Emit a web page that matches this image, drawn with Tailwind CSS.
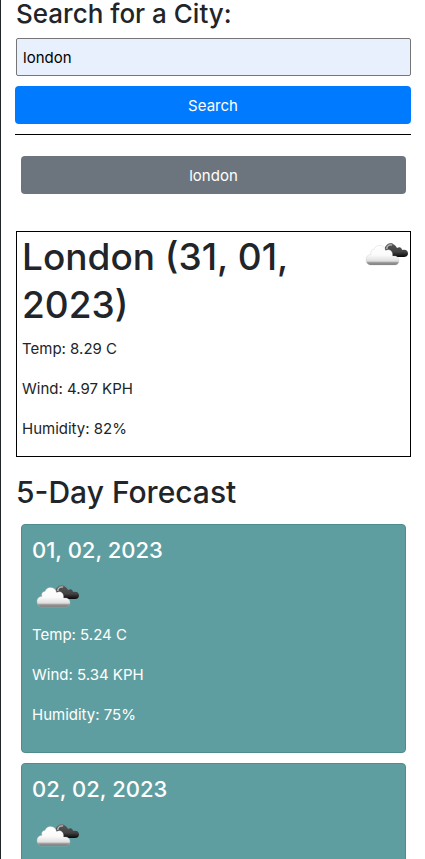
<!DOCTYPE html>
<html lang="en">
<head>
<meta charset="utf-8">
<meta name="viewport" content="width=device-width, initial-scale=1">
<title>Weather Dashboard</title>
<script src="https://cdn.jsdelivr.net/npm/@tailwindcss/browser@4"></script>
</head>
<body class="overflow-x-hidden bg-white font-['Inter','Liberation_Sans',sans-serif] text-[15px] leading-6 text-[#212529]">
<svg class="absolute size-0" aria-hidden="true">
  <defs>
    <linearGradient id="light" x1="0" y1="0" x2="0" y2="1">
      <stop offset="0" stop-color="#fff"/><stop offset=".5" stop-color="#fafafa"/><stop offset=".8" stop-color="#dedede"/><stop offset=".88" stop-color="#999"/><stop offset="1" stop-color="#777"/>
    </linearGradient>
    <linearGradient id="dark" x1="0" y1="0" x2="0" y2="1">
      <stop offset="0" stop-color="#555"/><stop offset=".6" stop-color="#424242"/><stop offset="1" stop-color="#080808"/>
    </linearGradient>
    <symbol id="clouds" viewBox="0 0 50 50">
      <path d="M24 20C23 16 27 13 31 14C33 14 35 16 36 18C39 16 41 18 41 20C45 19 47 21 47 23.500C47 26 45 27 43 27H28Z" fill="url(#dark)"/>
      <path d="M25.500 19C25.500 15.500 28 13.700 31.500 14.200" fill="none" stroke="#777" stroke-width="2.200"/>
      <path d="M25.800 19C25.800 16 28 14.600 31 15" fill="none" stroke="#ddd" stroke-width=".8"/>
      <path d="M9 35C6 34.500 5 32 5 29.500C5 26.500 7 24.500 10 24.500C9 21 11 19.500 13 19.500C14 16 18 14.500 21 16C23 16.700 24 18.500 24.500 20.500C29 18.500 32 21.500 31.500 26C36 25.500 38 27.500 38 30.500C38 33.500 36 35 34 35Z" fill="url(#light)" stroke="#bbb" stroke-width=".3"/>
    </symbol>
  </defs>
</svg>
<div class="border-l border-[#212529] px-3.5">
  <header class="pb-[37px]">
    <form onsubmit="return false">
      <label for="city" class="block pb-2.5 pl-px text-[26px] leading-7 font-medium">Search for a City:</label>
      <div class="pl-px">
        <input id="city" type="text" value="london" class="block h-[38px] w-full rounded-xs border border-[#767676] bg-[#e8f0fe] px-1.5 text-black">
      </div>
      <button type="submit" class="mt-2.5 block h-[38px] w-full rounded-[4px] bg-[#007bff] pt-0.5 text-white">Search</button>
    </form>
    <hr class="my-2.5 border-black">
    <div class="pt-[11px] pr-[5px] pl-1.5">
      <button type="button" class="block h-[38px] w-full rounded-[4px] bg-[#6c757d] pt-0.5 text-white">london</button>
    </div>
  </header>
  <main class="pl-px">
    <section class="flex justify-between border border-black pl-[5px]">
      <div class="pt-px pb-[15px]">
        <h1 class="mb-2 text-[37px] leading-12 font-medium">London (31, 01, 2023)</h1>
        <p class="mb-4">Temp: 8.29 C</p>
        <p class="mb-4">Wind: 4.97 KPH</p>
        <p>Humidity: 82%</p>
      </div>
      <svg class="-mt-0.5 -mr-px size-[50px] shrink-0" role="img" aria-label="Broken clouds"><use href="#clouds"/></svg>
    </section>
    <h2 class="pt-4 pb-3 text-[30px] leading-[39px] font-medium">5-Day Forecast</h2>
    <div class="flex flex-col gap-2.5 px-[5px] pb-4">
      <article class="rounded-[4px] border border-[#508c8e] bg-[#5f9ea0] px-2.5 pt-[11px] pb-[25px] text-white">
        <h3 class="mb-2 text-[22px] leading-[29px] font-medium">01, 02, 2023</h3>
        <svg class="-mt-px block size-[50px]" role="img" aria-label="Broken clouds"><use href="#clouds"/></svg>
        <p class="mt-px mb-4">Temp: 5.24 C</p>
        <p class="mb-4">Wind: 5.34 KPH</p>
        <p>Humidity: 75%</p>
      </article>
      <article class="rounded-[4px] border border-[#508c8e] bg-[#5f9ea0] px-2.5 pt-[11px] pb-[25px] text-white">
        <h3 class="mb-2 text-[22px] leading-[29px] font-medium">02, 02, 2023</h3>
        <svg class="-mt-px block size-[50px]" role="img" aria-label="Broken clouds"><use href="#clouds"/></svg>
      </article>
    </div>
  </main>
</div>
</body>
</html>
